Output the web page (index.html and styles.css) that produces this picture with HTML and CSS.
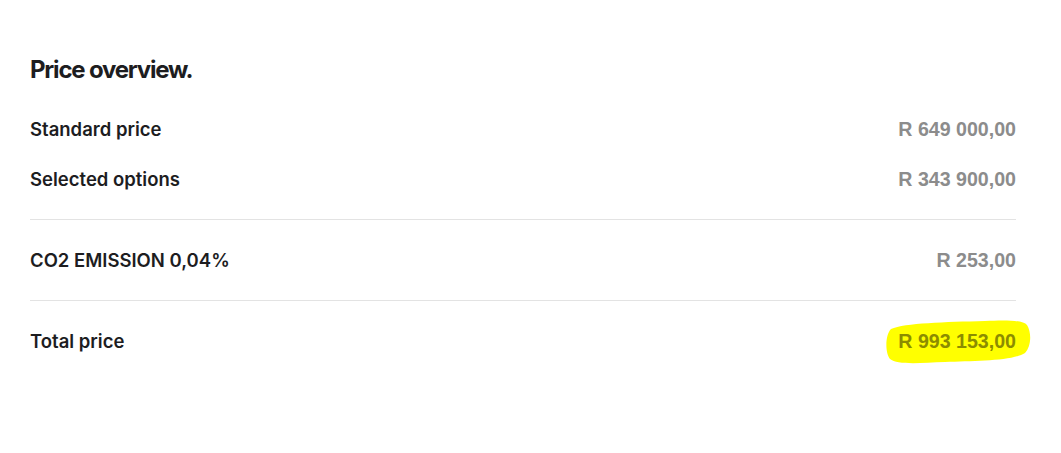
FILE: index.html
```html
<!DOCTYPE html>
<html>
<head>
<meta charset="utf-8">
<link rel="stylesheet" href="styles.css">
</head>
<body>
<section class="overview">
  <h2 class="title">Price overview.</h2>
  <div class="group first">
    <div class="row"><span class="label">Standard price</span><span class="price">R 649 000,00</span></div>
    <div class="row"><span class="label">Selected options</span><span class="price">R 343 900,00</span></div>
  </div>
  <div class="group">
    <div class="row"><span class="label">CO2 EMISSION 0,04%</span><span class="price">R 253,00</span></div>
  </div>
  <div class="group">
    <div class="row"><span class="label">Total price</span><span class="price total"><svg class="marker" viewBox="0 0 146 46" preserveAspectRatio="none"><path d="M6 10 C20 4 60 3 100 2 C120 1 138 1 142 6 C147 14 146 28 140 34 C128 42 90 42 60 43 C35 44 12 46 5 40 C0 34 0 16 6 10 Z" fill="#ffff00"/></svg><span class="amount">R 993 153,00</span></span></div>
  </div>
</section>
</body>
</html>
```

FILE: styles.css
```css
html, body {
  margin: 0;
  padding: 0;
  background: #ffffff;
}
.overview {
  padding: 55px 45px 0 30px;
  font-family: "Inter", "Liberation Sans", sans-serif;
  color: #1d1d1f;
}
.title {
  margin: 0 0 29px 0;
  font-size: 24px;
  line-height: 30px;
  font-weight: 700;
  letter-spacing: -1.2px;
}
.group {
  border-top: 1px solid #e3e3e3;
  padding: 25px 0;
}
.group.first {
  border-top: none;
  padding-top: 0;
}
.row {
  display: flex;
  justify-content: space-between;
  align-items: center;
  height: 30px;
}
.row + .row {
  margin-top: 20px;
}
.label {
  font-size: 18.5px;
  font-weight: 600;
  letter-spacing: 0;
}
.price {
  font-family: "Liberation Sans", Arial, sans-serif;
  font-weight: 700;
  font-size: 19.6px;
  color: #8c8c8c;
}
.total {
  position: relative;
  display: inline-block;
}
.marker {
  position: absolute;
  left: -13px;
  top: -11px;
  width: 146px;
  height: 46px;
}
.amount {
  position: relative;
  color: #8c8c00;
}
```
